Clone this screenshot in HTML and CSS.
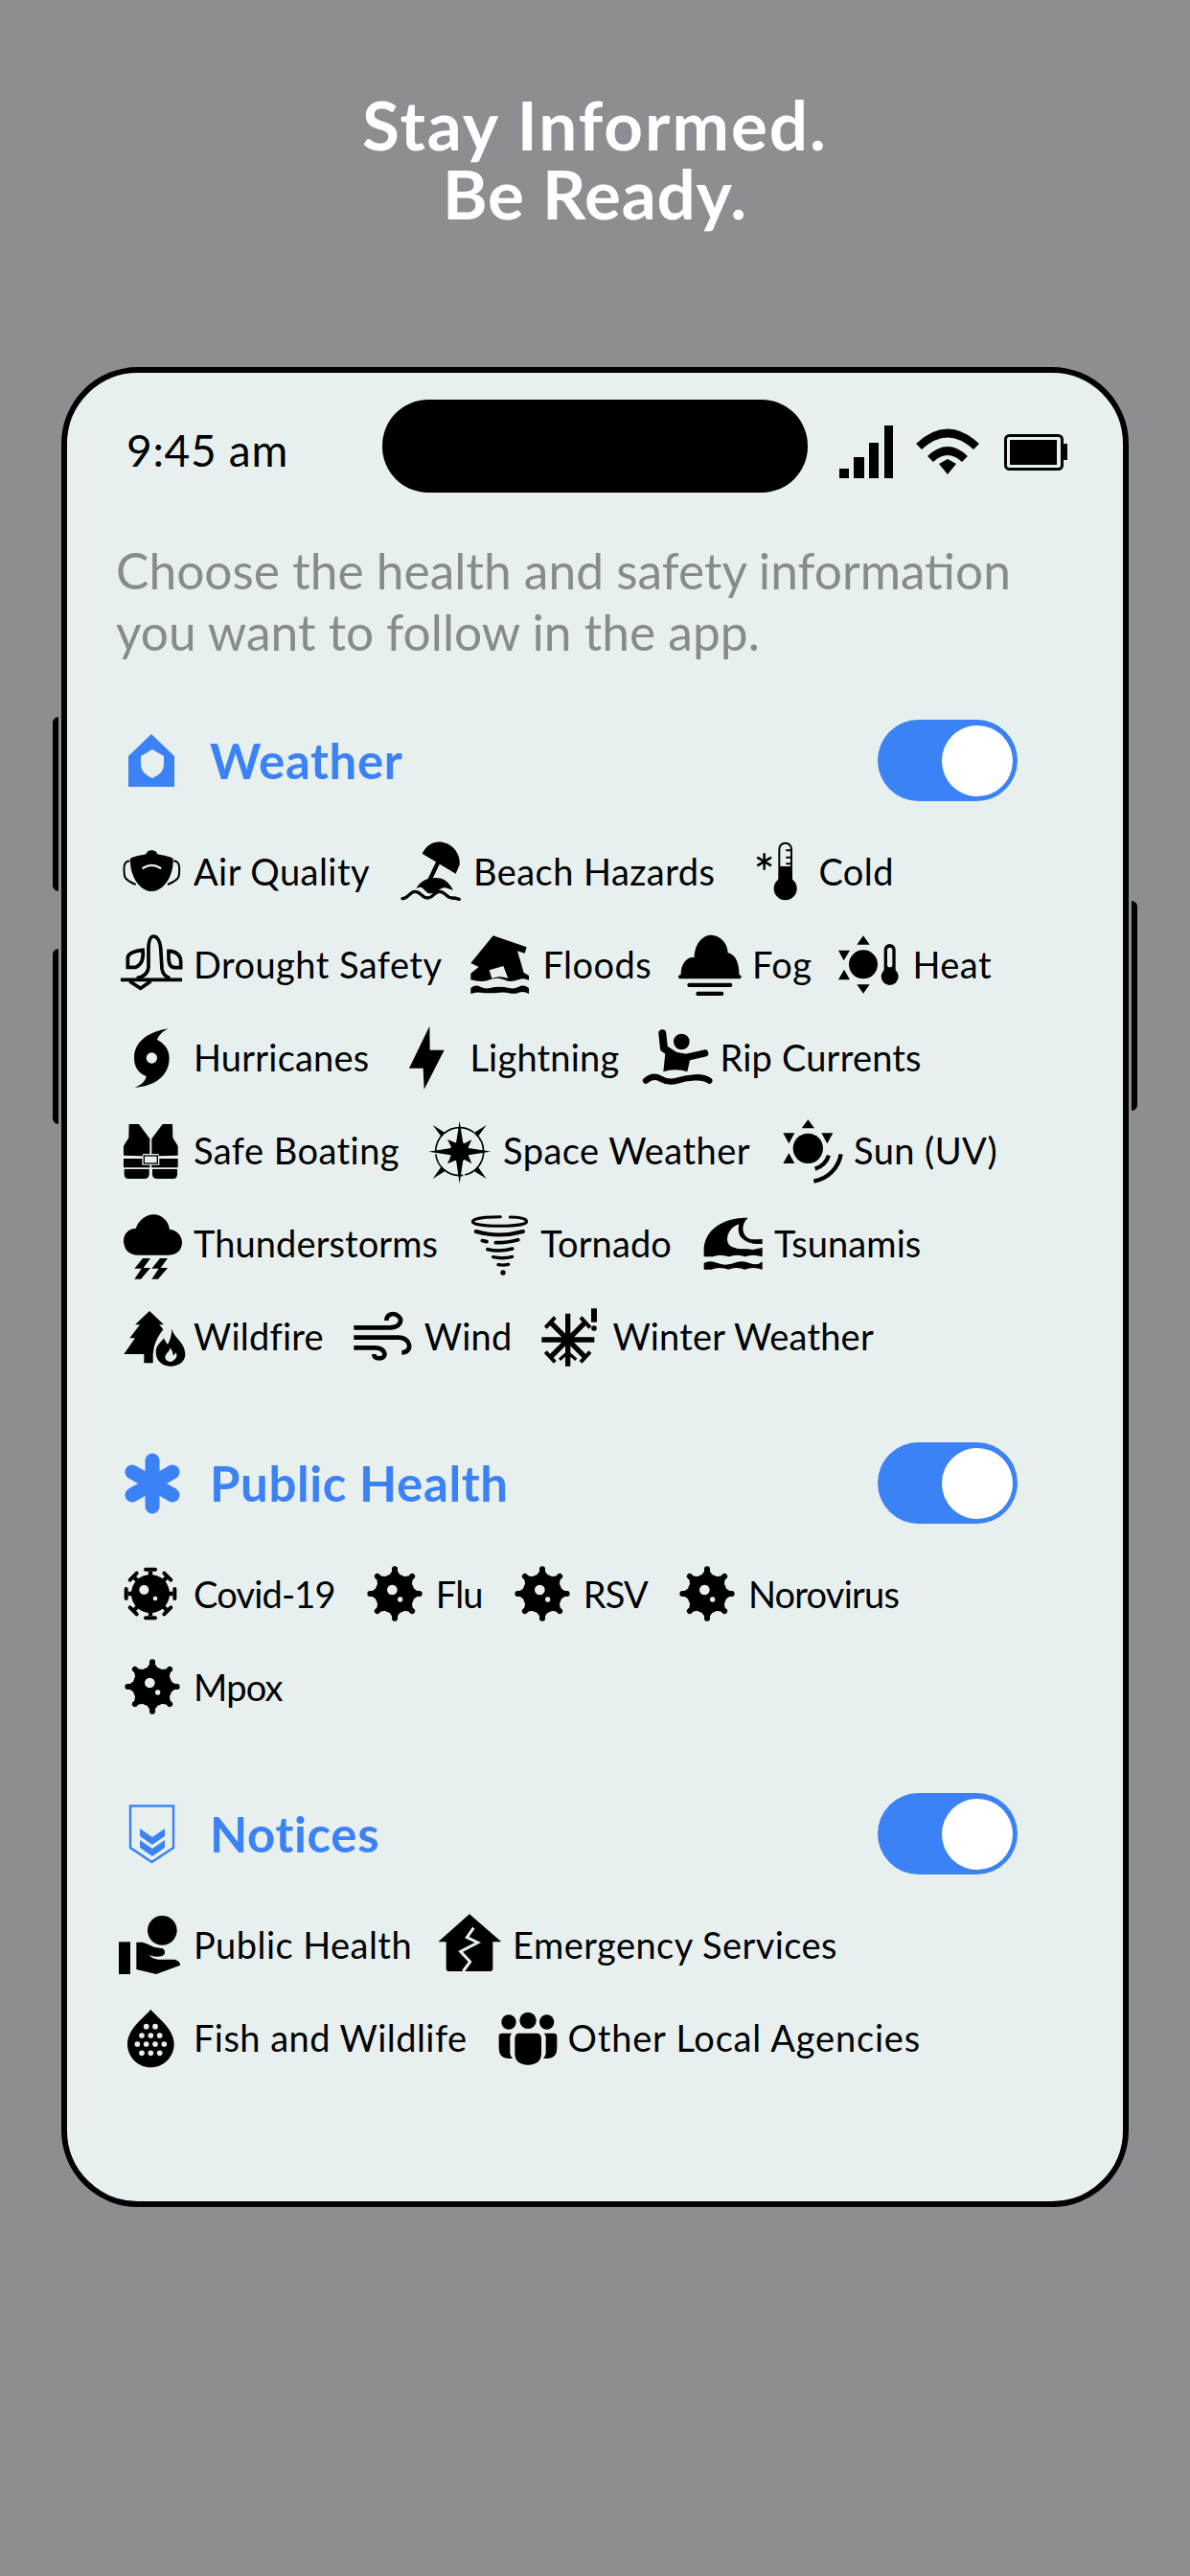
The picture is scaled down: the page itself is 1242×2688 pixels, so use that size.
FILE: index.html
```html
<!DOCTYPE html>
<html>
<head lang="en">
    <meta charset="UTF-8">
    <title>Stay Informed. Be Ready.</title>
    <link rel="stylesheet" href="styles.css">
</head>
<body>
<svg class="defs" width="0" height="0">
    <defs>
        <path id="spike" d="M-22 -52L-9 -70V-77A9 9 0 0 1 9 -77V-70L22 -52Z"/>
    </defs>
    <symbol id="virus" viewBox="-93 -93 186 186" overflow="visible">
        <circle r="62"/>
        <use href="#spike"/>
        <use href="#spike" transform="rotate(45)"/>
        <use href="#spike" transform="rotate(90)"/>
        <use href="#spike" transform="rotate(135)"/>
        <use href="#spike" transform="rotate(180)"/>
        <use href="#spike" transform="rotate(225)"/>
        <use href="#spike" transform="rotate(270)"/>
        <use href="#spike" transform="rotate(315)"/>
        <circle cx="-8" cy="-12" r="16" class="hole"/>
        <circle cx="17" cy="18" r="8" class="hole"/>
    </symbol>
</svg>

<h1 class="title">Stay Informed.<br><span class="title-short">Be Ready.</span></h1>

<div class="phone">
    <span class="btn btn-l1"></span>
    <span class="btn btn-l2"></span>
    <span class="btn btn-r"></span>

    <div class="status">
        <div class="time">9:45 am</div>
        <div class="island"></div>
        <svg class="status-ico" viewBox="843 417 329 97">
            <rect x="876" y="489" width="10" height="10"/>
            <rect x="891" y="477" width="11" height="22"/>
            <rect x="907" y="462" width="10" height="37"/>
            <rect x="923" y="444" width="9" height="55"/>
            <path d="M959 466Q989 438 1019 466M971 479Q989 462 1007 479" fill="none" stroke="#000" stroke-width="8.5"/>
            <path d="M989 479L998 484L989 495L980 484Z"/>
            <rect x="1049.5" y="454.5" width="59" height="35" rx="4" fill="none" stroke="#000" stroke-width="3"/>
            <rect x="1054" y="459" width="49" height="26"/>
            <rect x="1110" y="463" width="4" height="17"/>
        </svg>
    </div>

    <p class="prompt">Choose the health and safety information<br>you want to follow in the app.</p>

    <section class="group">
        <div class="group-head">
            <svg class="ico" viewBox="128 764 62 62">
                <path class="blue" d="M158 767L182 790V822H134V790Z"/>
                <path class="hole" d="M159 783L171 790V799Q171 808 159 813Q147 808 147 799V790Z"/>
            </svg>
            <h2>Weather</h2>
            <div class="toggle"><span class="knob"></span></div>
        </div>
        <div class="row">
            <div class="chip">
                <svg class="ico" viewBox="84 87 186 186">
                    <path d="M108 140C130 130 150 130 158 126Q160 115 175 115Q190 115 192 126C200 130 220 130 242 140C245 190 215 243 175 243C135 243 105 190 108 140Z"/>
                    <path d="M148 170Q175 153 202 170" fill="none" class="hole-line" stroke-width="7" stroke-linecap="round"/>
                    <path d="M106 148C88 150 86 165 90 195Q92 208 125 222M244 148C262 150 264 165 260 195Q258 208 225 222" fill="none" stroke="#000" stroke-width="6"/>
                </svg>
                <span>Air Quality</span>
            </div>
            <div class="chip">
                <svg class="ico" viewBox="963 87 186 186">
                    <path d="M1025 125C1040 95 1065 85 1090 90C1125 97 1145 130 1142 160L1130 188Z"/>
                    <path d="M1076 150L1048 208" stroke="#000" stroke-width="13" fill="none"/>
                    <path d="M1006 236C1015 210 1050 195 1085 203Q1108 211 1122 240Q1108 236 1098 232C1082 228 1072 250 1052 250C1035 250 1030 230 1018 230Q1010 230 1006 236Z"/>
                    <path d="M963 266C980 268 985 244 1003 244C1020 244 1024 264 1042 264C1060 264 1062 244 1080 244C1098 244 1100 264 1118 264Q1130 264 1141 268" fill="none" stroke="#000" stroke-width="10" stroke-linecap="round"/>
                </svg>
                <span>Beach Hazards</span>
            </div>
            <div class="chip">
                <svg class="ico" viewBox="597 87 186 186">
                    <path d="M650 124V176M628 137L672 163M672 137L628 163" stroke="#000" stroke-width="7.5" fill="none"/>
                    <rect x="697" y="92" width="38" height="135" rx="19" fill="none" stroke="#000" stroke-width="6"/>
                    <rect x="697" y="165" width="38" height="60"/>
                    <circle cx="716" cy="235" r="36"/>
                    <path d="M718 115H735M718 137H735M718 157H735" stroke="#000" stroke-width="6"/>
                </svg>
                <span>Cold</span>
            </div>
        </div>
        <div class="row row-tight">
            <div class="chip">
                <svg class="ico" viewBox="84 378 186 186">
                    <g fill="none" stroke="#000" stroke-width="11">
                        <path d="M78 520H270M106 525L140 547L172 525"/>
                        <path d="M128 515Q162 510 165 480V415Q168 384 180 384Q198 384 203 420L207 485Q210 508 232 515"/>
                        <path d="M100 481V450Q103 432 147 427Q152 470 125 481Z"/>
                        <path d="M228 430Q264 432 266 462V482H248Q228 482 228 450Z"/>
                    </g>
                </svg>
                <span>Drought Safety</span>
            </div>
            <div class="chip">
                <svg class="ico" viewBox="1182 378 186 186">
                    <path fill-rule="evenodd" d="M1250 382L1355 418L1349 437L1326 430L1346 498L1362 507V522Q1345 512 1330 520Q1300 530 1285 520Q1262 510 1240 520Q1215 530 1180 520V500L1205 480L1180 468ZM1238 490L1282 477L1297 516Q1270 505 1246 516Z"/>
                    <path d="M1180 546Q1195 534 1210 542T1240 546T1270 542T1300 546T1330 542T1362 546V564Q1345 554 1330 560T1300 562T1270 560T1240 562T1210 560T1180 564Z"/>
                </svg>
                <span>Floods</span>
            </div>
            <div class="chip">
                <svg class="ico" viewBox="399 378 186 186">
                    <path d="M398 510C395 470 420 445 440 451C440 410 465 380 492 380C520 380 545 405 545 436C570 440 582 470 580 510Z"/>
                    <rect x="390" y="505" width="197" height="12" rx="6"/>
                    <rect x="418" y="530" width="141" height="13" rx="6"/>
                    <rect x="445" y="557" width="87" height="13" rx="6"/>
                </svg>
                <span>Fog</span>
            </div>
            <div class="chip">
                <svg class="ico" viewBox="903 378 186 186">
                    <circle cx="972" cy="472" r="45"/>
                    <path d="M972 382L952 410H992ZM972 563L952 535H992ZM894 428H930L911 460ZM894 520H930L912 488Z"/>
                    <rect x="1037" y="408" width="36" height="100" rx="18"/>
                    <rect x="1047" y="419" width="16" height="62" rx="8" class="hole"/>
                    <circle cx="1055" cy="510" r="27"/>
                </svg>
                <span>Heat</span>
            </div>
        </div>
        <div class="row row-tight row-soft">
            <div class="chip">
                <svg class="ico" viewBox="84 669 186 186">
                    <path fill-rule="evenodd" d="M228 673C190 678 120 700 120 765C120 800 140 815 158 822C155 840 140 850 122 857C170 855 230 830 230 765C230 730 205 715 192 708C197 695 210 680 228 673ZM175 748A17 17 0 1 0 175.1 782A17 17 0 1 0 175 748Z"/>
                </svg>
                <span>Hurricanes</span>
            </div>
            <div class="chip">
                <svg class="ico" viewBox="945 669 186 186">
                    <polygon points="1042,665 978,797 1022,797 1025,863 1088,740 1043,740"/>
                </svg>
                <span>Lightning</span>
            </div>
            <div class="chip">
                <svg class="ico" viewBox="297 669 186 186">
                    <circle cx="400" cy="714" r="25"/>
                    <path d="M340 688L345 735L378 757" fill="none" stroke="#000" stroke-width="24" stroke-linecap="round" stroke-linejoin="round"/>
                    <path d="M385 770L473 750" fill="none" stroke="#000" stroke-width="22" stroke-linecap="round"/>
                    <path d="M350 740L430 755L418 808Q380 795 343 808Z"/>
                    <path d="M288 836Q310 816 335 830T385 836T440 826T487 836" fill="none" stroke="#000" stroke-width="19" stroke-linecap="round"/>
                </svg>
                <span>Rip Currents</span>
            </div>
        </div>
        <div class="row">
            <div class="chip">
                <svg class="ico" viewBox="87 60 186 186">
                    <path d="M107 72H138L172 118V165H150V172L90 170V140L106 115Z"/>
                    <path d="M243 72H212L178 118V165H200V172L260 170V140L244 115Z"/>
                    <path d="M90 180H148V200L172 200V208H90ZM260 180H202V200H178V208H260Z"/>
                    <path d="M92 213H170V230Q168 243 155 243H104Q94 243 92 230ZM258 213H180V230Q182 243 195 243H246Q256 243 258 230Z"/>
                    <rect x="154" y="171" width="42" height="24" fill="none" stroke="#000" stroke-width="4"/>
                </svg>
                <span>Safe Boating</span>
            </div>
            <div class="chip">
                <svg class="ico" viewBox="1056 60 186 186">
                    <circle cx="1142" cy="158" r="75" fill="none" stroke="#000" stroke-width="5" stroke-dasharray="100 6 120 8 60 5 100 6"/>
                    <polygon points="1142,62 1155,145 1240,158 1155,171 1142,258 1129,171 1045,158 1129,145"/>
                    <polygon points="1104,120 1148,138 1180,120 1164,156 1180,196 1148,178 1104,196 1122,156"/>
                    <circle cx="1142" cy="158" r="30"/>
                    <path d="M1058 75L1098 100L1084 110ZM1226 75L1186 100L1200 110ZM1058 243L1098 218L1084 206ZM1226 243L1186 218L1200 206Z" />
                </svg>
                <span>Space Weather</span>
            </div>
            <div class="chip">
                <svg class="ico" viewBox="1011 60 186 186">
                    <circle cx="1090" cy="148" r="47"/>
                    <path d="M1090 58L1070 85H1110ZM1012 100H1048L1030 133ZM1168 100H1132L1150 133ZM1012 195H1048L1030 163Z"/>
                    <path d="M1155 170A66 66 0 0 1 1112 212M1193 166A104 104 0 0 1 1108 251" fill="none" stroke="#000" stroke-width="13"/>
                </svg>
                <span>Sun (UV)</span>
            </div>
        </div>
        <div class="row row-storm">
            <div class="chip">
                <svg class="ico" viewBox="81 354 186 186">
                    <path d="M130 485C100 485 84 465 84 440C84 415 105 400 122 402C130 375 155 358 178 358C205 358 225 380 228 405C250 405 267 425 267 445C267 470 250 485 225 485Z"/>
                    <path d="M144 495L118 527H140L118 560H138L168 525H146L168 495ZM198 495L172 527H194L172 560H192L222 525H200L222 495Z"/>
                </svg>
                <span>Thunderstorms</span>
            </div>
            <div class="chip">
                <svg class="ico" viewBox="1158 354 186 186">
                    <g fill="none" stroke="#000" stroke-linecap="round">
                        <path d="M1285 366C1320 366 1337 372 1337 380C1337 388 1300 394 1252 394C1204 394 1168 388 1168 380C1168 372 1200 365 1255 365" stroke-width="9"/>
                        <path d="M1178 411Q1252 432 1326 411" stroke-width="12"/>
                        <path d="M1198 440L1212 443M1240 446Q1280 446 1310 437" stroke-width="11"/>
                        <path d="M1215 467Q1252 476 1292 465" stroke-width="11"/>
                        <path d="M1232 491Q1262 498 1292 490" stroke-width="10"/>
                        <path d="M1248 515Q1265 518 1280 514" stroke-width="10"/>
                    </g>
                    <circle cx="1263" cy="540" r="8"/>
                </svg>
                <span>Tornado</span>
            </div>
            <div class="chip">
                <svg class="ico" viewBox="750 354 186 186">
                    <path d="M752 490V470C752 415 800 368 890 368C872 385 868 410 885 428C900 440 915 435 935 435V450C905 452 880 445 865 425C858 412 860 395 862 388C840 395 825 415 825 435C825 450 835 460 850 462C865 470 880 462 905 468L935 462V490Q905 480 880 490Q860 480 830 490Q800 480 780 490Z"/>
                    <path d="M752 510Q770 500 795 510T845 510T895 510T935 505V530Q905 520 880 530Q855 520 830 530Q800 520 775 530L752 530Z"/>
                </svg>
                <span>Tsunamis</span>
            </div>
        </div>
        <div class="row row-tight row-soft">
            <div class="chip">
                <svg class="ico" viewBox="81 645 186 186">
                    <path d="M165 660L210 703H196L208 718Q190 740 180 770L176 795V823H148V795H85L120 745H103L135 703H120Z"/>
                    <path fill-rule="evenodd" d="M235 715C240 745 275 755 277 795C277 820 255 833 230 833C205 833 185 815 185 790C185 765 205 755 210 745C215 755 218 760 222 765C230 750 235 735 235 715ZM230 775C228 790 210 795 215 810Q225 825 240 815Q255 805 248 790L240 800Q238 785 230 775Z"/>
                </svg>
                <span>Wildfire</span>
            </div>
            <div class="chip">
                <svg class="ico" viewBox="804 645 186 186">
                    <g fill="none" stroke="#000" stroke-width="14">
                        <path d="M805 712H915C950 712 958 690 945 677C930 662 907 670 907 690"/>
                        <path d="M805 743H945C985 743 990 790 955 790"/>
                        <path d="M805 775H870C905 775 912 808 885 808Q868 808 868 795"/>
                    </g>
                </svg>
                <span>Wind</span>
            </div>
            <div class="chip">
                <svg class="ico" viewBox="249 645 186 186">
                    <path d="M332 668V833M250 750H415M280 698L384 802M384 698L280 802" fill="none" stroke="#000" stroke-width="16"/>
                    <path d="M262 712L292 680M402 712L372 680M262 788L292 820M402 788L372 820" fill="none" stroke="#000" stroke-width="12"/>
                    <path d="M306 812L332 790L358 812" fill="none" stroke="#000" stroke-width="10"/>
                    <rect x="405" y="652" width="18" height="43"/>
                    <circle cx="414" cy="714" r="8.5"/>
                </svg>
                <span>Winter Weather</span>
            </div>
        </div>
    </section>

    <section class="group">
        <div class="group-head">
            <svg class="ico" viewBox="127 1518 62 62">
                <path class="blue-line" d="M158 1525V1573M137 1537L179 1561M179 1537L137 1561" fill="none" stroke-width="15" stroke-linecap="round"/>
            </svg>
            <h2>Public Health</h2>
            <div class="toggle"><span class="knob"></span></div>
        </div>
        <div class="row row-narrow">
            <div class="chip">
                <svg class="ico" viewBox="-87 -93 186 186">
                    <g stroke="#000" stroke-width="13">
                        <path d="M0 0V-70M0 0V70M0 0H-70M0 0H70M0 0L-50 -50M0 0L50 50M0 0L-50 50M0 0L50 -50"/>
                    </g>
                    <circle r="60"/>
                    <g stroke="#000" stroke-width="12" stroke-linecap="round">
                        <path d="M-15 -76H15M-15 76H15M-76 -15V15M76 -15V15M-64 -43L-43 -64M64 -43L43 -64M-64 43L-43 64M64 43L43 64"/>
                    </g>
                    <circle cx="-20" cy="-12" r="15" class="hole"/>
                    <circle cx="15" cy="15" r="7" class="hole"/>
                </svg>
                <span>Covid-19</span>
            </div>
            <div class="chip">
                <svg class="ico"><use href="#virus"/></svg>
                <span>Flu</span>
            </div>
            <div class="chip">
                <svg class="ico"><use href="#virus"/></svg>
                <span>RSV</span>
            </div>
            <div class="chip">
                <svg class="ico"><use href="#virus"/></svg>
                <span>Norovirus</span>
            </div>
        </div>
        <div class="row row-narrow">
            <div class="chip">
                <svg class="ico"><use href="#virus"/></svg>
                <span>Mpox</span>
            </div>
        </div>
    </section>

    <section class="group">
        <div class="group-head">
            <svg class="ico" viewBox="128 1884 62 62">
                <path class="blue-line" d="M136 1885.5H181V1929L158.5 1944L136 1929Z" fill="none" stroke-width="2.5"/>
                <path class="blue" d="M146 1909L159 1918L172 1909V1917L159 1926L146 1917ZM146 1921L159 1930L172 1921V1929L159 1938L146 1929Z"/>
            </svg>
            <h2>Notices</h2>
            <div class="toggle"><span class="knob"></span></div>
        </div>
        <div class="row row-tight">
            <div class="chip">
                <svg class="ico" viewBox="87 57 186 186">
                    <circle cx="211" cy="106" r="46"/>
                    <rect x="75" y="142" width="36" height="101"/>
                    <path d="M130 143H150Q170 150 185 158L213 163Q222 170 218 180Q212 190 190 188L170 184Q185 198 200 197H250Q268 202 267 215L192 243L130 228Z"/>
                </svg>
                <span>Public Health</span>
            </div>
            <div class="chip">
                <svg class="ico" viewBox="1083 57 186 186">
                    <path d="M1170 55L1270 142H1243V225Q1243 234 1235 234H1105Q1097 234 1097 225V142H1072Z"/>
                    <path class="hole-line" d="M1183 98L1162 128L1196 144L1142 172L1172 204L1150 234" fill="none" stroke-width="9"/>
                </svg>
                <span>Emergency Services</span>
            </div>
        </div>
        <div class="row row-tight">
            <div class="chip">
                <svg class="ico" viewBox="87 348 186 186">
                    <path d="M175 353C190 375 248 410 248 462C248 502 215 535 175 535C135 535 102 502 102 462C102 410 160 375 175 353Z"/>
                    <g class="hole">
                        <circle cx="161" cy="407" r="8.5"/><circle cx="189" cy="407" r="8.5"/>
                        <circle cx="147" cy="435" r="8.5"/><circle cx="175" cy="435" r="8.5"/><circle cx="203" cy="435" r="8.5"/>
                        <circle cx="133" cy="462" r="8.5"/><circle cx="161" cy="462" r="8.5"/><circle cx="189" cy="462" r="8.5"/><circle cx="217" cy="462" r="8.5"/>
                        <circle cx="147" cy="490" r="8.5"/><circle cx="175" cy="490" r="8.5"/><circle cx="203" cy="490" r="8.5"/>
                    </g>
                </svg>
                <span>Fish and Wildlife</span>
            </div>
            <div class="chip chip-wide">
                <svg class="ico" viewBox="1257 348 186 186">
                    <circle cx="1293" cy="393" r="23"/>
                    <circle cx="1353" cy="388" r="26"/>
                    <circle cx="1412" cy="393" r="23"/>
                    <path d="M1325 428H1380Q1395 428 1395 445V490Q1395 527 1353 527Q1312 527 1312 490V445Q1312 428 1325 428Z"/>
                    <path d="M1272 428H1303Q1295 435 1297 450V490Q1297 500 1305 507H1290Q1262 505 1262 475V438Q1262 428 1272 428Z"/>
                    <path d="M1434 428H1403Q1411 435 1409 450V490Q1409 500 1401 507H1416Q1444 505 1444 475V438Q1444 428 1434 428Z"/>
                </svg>
                <span>Other Local Agencies</span>
            </div>
        </div>
    </section>
</div>
</body>
</html>
```

FILE: styles.css
```css
*{
    margin: 0;
    padding: 0;
    box-sizing: border-box;
}
body{
    width: 1242px;
    height: 2688px;
    background: #8e8d92;
    font-family: "Lato", "Liberation Sans", sans-serif;
    color: #000;
    overflow: hidden;
}
.defs{
    position: absolute;
}
.title{
    padding-top: 94px;
    font-size: 71px;
    line-height: 72px;
    letter-spacing: 2px;
    font-weight: 700;
    text-align: center;
    color: #fff;
}
.title-short{
    letter-spacing: .8px;
}
.phone{
    position: relative;
    width: 1114px;
    height: 1920px;
    margin: 145px auto 0;
    background: #e8f0ef;
    border: 6px solid #000;
    border-radius: 80px;
}
.btn{
    position: absolute;
    width: 6px;
    background: #000;
}
.btn-l1{
    left: -15px;
    top: 359px;
    height: 182px;
    border-radius: 6px 0 0 6px;
}
.btn-l2{
    left: -15px;
    top: 601px;
    height: 183px;
    border-radius: 6px 0 0 6px;
}
.btn-r{
    right: -15px;
    top: 551px;
    height: 219px;
    border-radius: 0 6px 6px 0;
}
.status{
    display: grid;
    grid-template-columns: 329px 444px 329px;
    padding-top: 28px;
}
.time{
    padding: 4px 0 0 62px;
    font-size: 46px;
    line-height: 97px;
    letter-spacing: .7px;
}
.island{
    height: 97px;
    background: #000;
    border-radius: 48px;
}
.status-ico{
    display: block;
    width: 329px;
    height: 97px;
    overflow: visible;
}
.prompt{
    margin: 45px 0 0 51px;
    font-size: 51.5px;
    line-height: 64px;
    color: #888b8c;
}
.group{
    display: flex;
    flex-direction: column;
    gap: 35px;
    margin-top: 80px;
    padding: 0 110px 0 58px;
}
.group:first-of-type{
    margin-top: 60px;
}
.group-head{
    display: flex;
    align-items: center;
    height: 85px;
    margin-bottom: 7px;
}
.group-head h2{
    flex: 1;
    margin-left: 29px;
    font-size: 51px;
    font-weight: 700;
    letter-spacing: .6px;
    color: #3b82f6;
}
.toggle{
    display: flex;
    align-items: center;
    justify-content: flex-end;
    width: 146px;
    height: 85px;
    padding-right: 5px;
    background: #3b82f6;
    border-radius: 43px;
}
.knob{
    width: 74px;
    height: 74px;
    background: #fff;
    border-radius: 50%;
}
.row{
    display: flex;
    gap: 34px;
    height: 62px;
    letter-spacing: .45px;
}
.row-tight{
    gap: 31px;
}
.row-soft{
    letter-spacing: .2px;
}
.row-storm{
    gap: 33px;
    letter-spacing: .1px;
}
.row-narrow{
    gap: 31px;
    letter-spacing: -.8px;
}
.chip{
    display: flex;
    align-items: center;
    gap: 12px;
    font-size: 38px;
    white-space: nowrap;
}
.chip-wide{
    letter-spacing: .8px;
}
.ico{
    display: block;
    flex: none;
    width: 62px;
    height: 62px;
    overflow: visible;
}
.hole{
    fill: #e8f0ef;
}
.hole-line{
    stroke: #e8f0ef;
}
.blue{
    fill: #3b82f6;
}
.blue-line{
    stroke: #3b82f6;
}
```
